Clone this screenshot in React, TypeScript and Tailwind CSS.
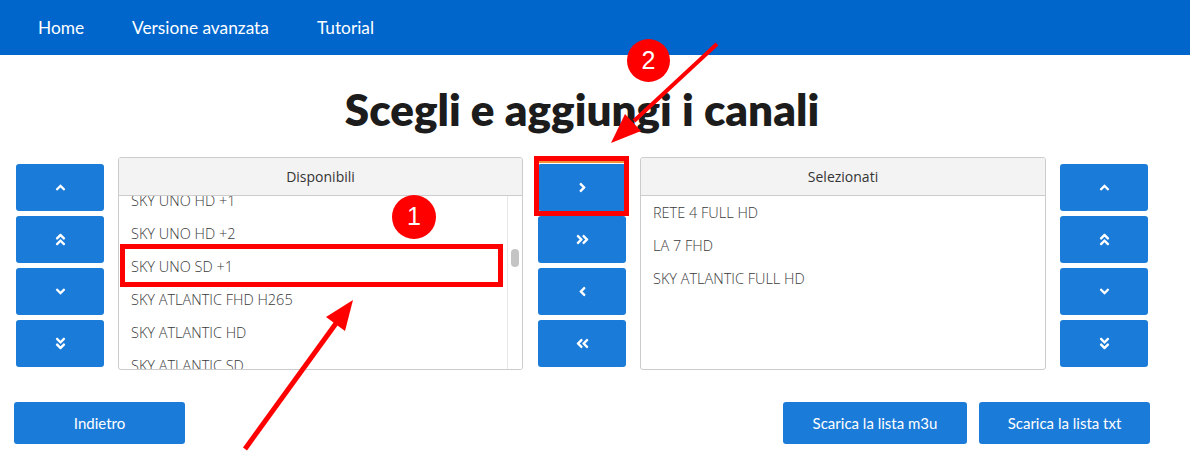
import {
  FaAngleUp,
  FaAngleDoubleUp,
  FaAngleDown,
  FaAngleDoubleDown,
  FaAngleRight,
  FaAngleDoubleRight,
  FaAngleLeft,
  FaAngleDoubleLeft,
} from "react-icons/fa"

const available = [
  "SKY UNO HD +1",
  "SKY UNO HD +2",
  "SKY UNO SD +1",
  "SKY ATLANTIC FHD H265",
  "SKY ATLANTIC HD",
  "SKY ATLANTIC SD",
]

const selected = ["RETE 4 FULL HD", "LA 7 FHD", "SKY ATLANTIC FULL HD"]

const title = "font-['Lato','Liberation_Sans',sans-serif]"
const body = "font-['Open_Sans','Liberation_Sans',sans-serif]"

function SideButton({ children }: { children: React.ReactNode }) {
  return (
    <button className="flex h-[47px] w-[88px] items-center justify-center rounded-[3px] bg-[#1b7bd8] text-white">
      {children}
    </button>
  )
}

function ButtonColumn({ icons }: { icons: React.ReactNode[] }) {
  return (
    <div className="flex w-[88px] flex-col gap-[5px] pt-[7px]">
      {icons.map((icon, i) => (
        <SideButton key={i}>{icon}</SideButton>
      ))}
    </div>
  )
}

function ListBox({
  label,
  items,
  offset,
  scroll,
  width,
}: {
  label: string
  items: string[]
  offset?: boolean
  scroll?: boolean
  width: string
}) {
  return (
    <div className={`flex h-[213px] flex-col overflow-hidden rounded-[3px] border border-[#cccccc] ${width} ${body}`}>
      <div className="flex h-[38px] shrink-0 items-center justify-center border-b border-[#cccccc] bg-[#f3f3f3] text-[14px] text-[#333333]">
        {label}
      </div>
      <div className="flex min-h-0 flex-1">
        <div className="min-w-0 flex-1 overflow-hidden">
          <div className={offset ? "-mt-[12px]" : ""}>
            {items.map((item) => (
              <div key={item} className="flex h-[33px] items-center pl-3 text-[14.5px] font-light text-[#3a3a3a]">
                {item}
              </div>
            ))}
          </div>
        </div>
        {scroll && (
          <div className="w-[15px] shrink-0 border-l border-[#e6e6e6] bg-white">
            <div className="mx-auto mt-[53px] h-[18px] w-[8px] rounded-full bg-[#c4c4c4]" />
          </div>
        )}
      </div>
    </div>
  )
}

export default function App() {
  const ic = "h-[15px] w-[15px]"
  return (
    <div className="relative min-h-[473px] bg-white">
      {/* Nav */}
      <nav className={`flex h-[55px] items-center gap-12 bg-[#0066cc] pl-[38px] text-[17.3px] text-white ${title}`}>
        <span>Home</span>
        <span>Versione avanzata</span>
        <span>Tutorial</span>
      </nav>

      <div className="ml-[14px] w-[1136px]">
        <h1 className={`mt-[27px] h-[55px] text-center text-[44px] font-extrabold leading-[55px] text-[#1c1c1c] ${title}`}>
          Scegli e aggiungi i canali
        </h1>

        {/* Dual list */}
        <div className="mt-[20px] flex pl-[2px]">
          <ButtonColumn
            icons={[
              <FaAngleUp className={ic} />,
              <FaAngleDoubleUp className={ic} />,
              <FaAngleDown className={ic} />,
              <FaAngleDoubleDown className={ic} />,
            ]}
          />
          <div className="ml-[14px]">
            <ListBox label="Disponibili" items={available} offset scroll width="w-[405px]" />
          </div>
          <div className="ml-[15px]">
            <ButtonColumn
              icons={[
                <FaAngleRight className={ic} />,
                <FaAngleDoubleRight className={ic} />,
                <FaAngleLeft className={ic} />,
                <FaAngleDoubleLeft className={ic} />,
              ]}
            />
          </div>
          <div className="ml-[14px]">
            <ListBox label="Selezionati" items={selected} width="w-[406px]" />
          </div>
          <div className="ml-[14px]">
            <ButtonColumn
              icons={[
                <FaAngleUp className={ic} />,
                <FaAngleDoubleUp className={ic} />,
                <FaAngleDown className={ic} />,
                <FaAngleDoubleDown className={ic} />,
              ]}
            />
          </div>
        </div>

        {/* Bottom actions */}
        <div className={`mt-[32px] flex items-center text-[15px] text-white ${title}`}>
          <button className="h-[42px] w-[171px] rounded-[3px] bg-[#1b7bd8]">Indietro</button>
          <div className="ml-auto flex gap-3">
            <button className="h-[42px] w-[184px] rounded-[3px] bg-[#1b7bd8]">Scarica la lista m3u</button>
            <button className="h-[42px] w-[171px] rounded-[3px] bg-[#1b7bd8]">Scarica la lista txt</button>
          </div>
        </div>
      </div>

      {/* Annotations */}
      <div className="absolute left-[120px] top-[244px] h-[43px] w-[383px] border-[5px] border-[#ff0000]" />
      <div className="absolute left-[534px] top-[156px] h-[60px] w-[95px] border-[5px] border-[#ff0000]">
        <div className="h-[2px] bg-[#f2913a]" />
      </div>
      <div className="absolute left-[392px] top-[195px] flex h-[44px] w-[44px] items-center justify-center rounded-full bg-[#ff0000] font-['Liberation_Sans',sans-serif] text-[25px] text-white">
        1
      </div>
      <div className="absolute left-[627px] top-[39px] flex h-[43px] w-[43px] items-center justify-center rounded-full bg-[#ff0000] font-['Liberation_Sans',sans-serif] text-[25px] text-white">
        2
      </div>
      <svg className="pointer-events-none absolute left-0 top-0" width="1190" height="473">
        <line x1="245" y1="449" x2="337" y2="322" stroke="#ff0000" strokeWidth="5" />
        <polygon points="353,300 345,331 326,317" fill="#ff0000" />
        <line x1="717" y1="44" x2="634" y2="121" stroke="#ff0000" strokeWidth="4" />
        <polygon points="611,143 641,131 625,114" fill="#ff0000" />
      </svg>
    </div>
  )
}
